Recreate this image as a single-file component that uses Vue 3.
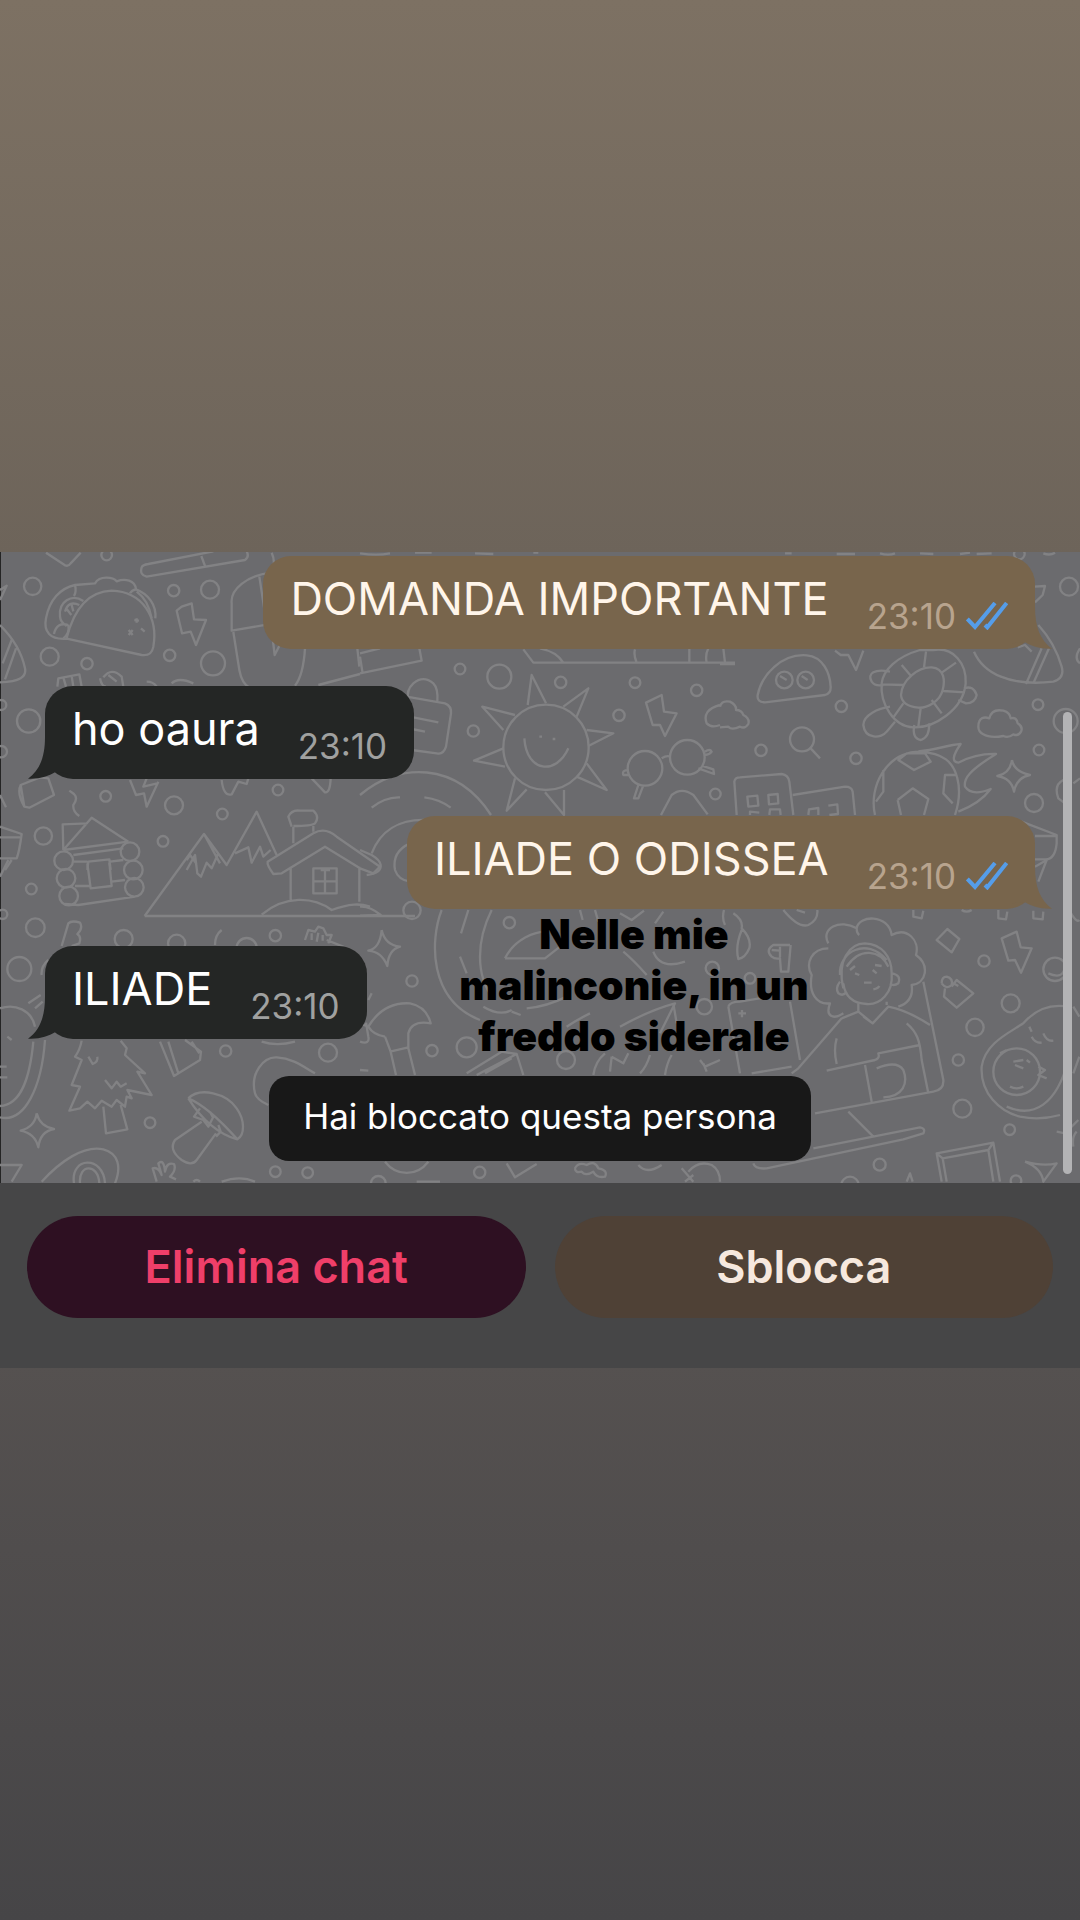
<template>
  <main class="story">
    <section class="chat-card">
      <div class="chat">
        <svg class="wallpaper" viewBox="0 36 3240 1893" preserveAspectRatio="xMinYMin slice" aria-hidden="true">
          <circle v-for="([x, y, r], i) in dots" :key="i" :cx="x" :cy="y" :r="r" />
          <path v-for="(d, i) in doodles.topLeft" :key="'a' + i" :d="d" />
          <g transform="translate(1080 0)">
            <path v-for="(d, i) in doodles.topMiddle" :key="i" :d="d" />
          </g>
          <g transform="translate(2160 0)">
            <path v-for="(d, i) in doodles.topRight" :key="i" :d="d" />
          </g>
          <g transform="translate(0 960)">
            <path v-for="(d, i) in doodles.bottomLeft" :key="i" :d="d" />
          </g>
          <g transform="translate(1080 960)">
            <path v-for="(d, i) in doodles.bottomMiddle" :key="i" :d="d" />
          </g>
          <g transform="translate(2160 960)">
            <path v-for="(d, i) in doodles.bottomRight" :key="i" :d="d" />
          </g>
        </svg>

        <div class="messages">
          <div
            v-for="message in messages"
            :key="message.text"
            class="bubble"
            :class="message.sent ? 'sent' : 'received'"
          >
            <svg class="tail" viewBox="84 591 120 126" aria-hidden="true">
              <path d="M135 591C135 650 120 690 84 716C120 718 145 708 165 697L204 700V591Z" />
            </svg>
            <span class="text">{{ message.text }}</span>
            <span class="meta">
              <time>{{ message.time }}</time>
              <svg v-if="message.sent" class="checks" viewBox="0 0 126 84" aria-label="Letto">
                <path d="M4 51L27 75L87 3M57 69L64 76L122 3" />
              </svg>
            </span>
          </div>
          <p class="notice">Hai bloccato questa persona</p>
        </div>

        <p class="caption">Nelle mie<br />malinconie, in un<br />freddo siderale</p>
        <div class="scrollbar"></div>
      </div>

      <div class="actions">
        <button type="button" class="action delete">Elimina chat</button>
        <button type="button" class="action unblock">Sblocca</button>
      </div>
    </section>
  </main>
</template>

<script setup>
const messages = [
  { text: 'DOMANDA IMPORTANTE', time: '23:10', sent: true },
  { text: 'ho oaura', time: '23:10', sent: false },
  { text: 'ILIADE O ODISSEA', time: '23:10', sent: true },
  { text: 'ILIADE', time: '23:10', sent: false },
];

// x, y, radius
const dots = [
  [98, 139, 26], [320, 45, 16], [521, 152, 17], [630, 149, 27], [149, 350, 27],
  [261, 371, 17], [509, 346, 17], [639, 370, 36], [86, 543, 35], [317, 769, 16],
  [522, 796, 27], [667, 822, 16], [834, 750, 16], [130, 888, 26], [489, 904, 16],
  [4, 495, 15], [4, 635, 17], [1380, 387, 16], [1498, 410, 36], [1682, 427, 17],
  [1905, 428, 16], [2090, 451, 17], [1857, 526, 17], [1420, 573, 17], [2146, 762, 16],
  [3207, 140, 27], [2524, 499, 17], [3114, 494, 16], [2283, 631, 17], [2568, 655, 17],
  [3117, 630, 16], [3102, 789, 27], [3197, 543, 36], [3058, 42, 16], [94, 1047, 16],
  [8, 1123, 14], [106, 1163, 28], [58, 1287, 36], [371, 1197, 27], [826, 1187, 17],
  [677, 1533, 17], [984, 1538, 27], [450, 1748, 16], [826, 1895, 16], [923, 1898, 16],
  [1236, 1111, 26], [1528, 1148, 17], [1236, 1323, 17], [1296, 1532, 17], [1400, 1522, 30],
  [1698, 1560, 27], [2113, 1400, 23], [1439, 1897, 17], [2952, 1263, 17], [3032, 1390, 27],
  [2925, 1462, 26], [2875, 1560, 17], [2887, 1706, 27], [3029, 1769, 16], [2639, 1874, 18],
  [3165, 1288, 35], [2250, 1315, 16], [2137, 1285, 20], [530, 1210, 26], [740, 1224, 30],
  [2550, 1936, 26], [3048, 1922, 16], [1135, 1930, 22],
];

const doodles = {
  topLeft: [
    // napkin, ruler
    'M138 38L195 76Q205 80 212 70L242 38',
    'M425 82Q418 105 440 110L735 60Q750 50 738 30M425 82Q428 74 445 72L640 34M604 48L615 78',
    // taco
    'M200 294C215 235 250 155 335 152C430 155 475 235 460 320C455 345 440 347 425 345L200 296C150 300 130 275 138 235C148 180 180 145 225 135L285 130C300 105 340 112 350 124C375 115 405 120 408 148C445 162 470 195 466 235',
    'M225 135Q230 155 222 168M408 148Q395 150 390 160M250 183C215 160 175 185 180 230C181 245 190 252 200 258M238 195Q205 180 195 215M215 195L220 214M200 207L214 225M162 282Q170 245 205 255M205 255Q210 280 190 295M410 155Q445 180 455 235',
    'M403 240L417 242M410 235V248M386 270L398 285M398 270L386 285M423 265L434 275',
    'M530 212L545 200L575 190L582 238L618 240L588 315L572 275L546 280Z',
    // glass
    'M815 98C740 105 690 150 695 190V272L800 254M778 110L800 254M700 276L718 390Q725 430 750 445M815 38Q825 60 820 80M818 295L824 345L842 310M915 325Q910 405 885 437M955 435L1080 402M1072 325L1078 380',
    // slice of pizza
    'M0 255C35 290 65 335 75 385C80 410 60 425 0 427M35 300L8 370M48 325L15 418M0 150L20 137L0 180',
    'M172 440L175 415L238 403L245 440M190 412L198 440M215 408L220 440M300 415Q305 440 318 440M310 412Q335 380 365 410L370 440M325 405L350 425M440 425Q460 425 470 440M515 430Q535 410 580 430',
    'M62 735L120 712L145 715L162 765L88 803L73 800ZM62 735Q50 760 73 800M0 765L18 802',
    'M208 752L222 762Q235 775 220 795Q218 815 238 828M390 720L408 765L432 760L440 800L475 725M440 715L430 740L472 730M665 720Q670 770 695 763L715 725L740 732L745 715M935 715L975 757Q990 760 992 715',
    // wooden cabin
    'M190 930L188 853L262 850M190 930L275 833L385 905M190 930L385 905M220 945L370 925M262 990L265 965L328 958L332 990M220 965L262 965M330 965L370 960',
    'M163 962A28 28 0 1 0 219 962A28 28 0 1 0 163 962M362 935A28 28 0 1 0 418 935A28 28 0 1 0 362 935',
    'M0 860L65 882Q58 935 50 955H0M0 892H60M35 960L15 990',
    // mountains
    'M434 1128L612 882L680 975L770 815L830 945M560 960L570 945L590 972M612 882L660 970M560 990L585 945L592 1000L603 1010L620 968L635 985L655 940M705 940L745 922L755 968L780 920L790 950L812 930',
    'M434 1128H1245M875 860L865 830Q875 808 900 812H940Q960 830 945 850Q935 858 880 858M880 860V910M940 858V875',
    // chalet
    'M803 965Q800 975 820 1002L845 1000L975 920L1080 985L1120 1000L1140 980L1010 890Q975 860 940 880ZM872 980V1085M1078 980V1085M940 985H1010V1060H940ZM975 985V1060M940 1024H1010M962 990H990M785 1124C855 1065 940 1070 995 1110C1050 1090 1080 1090 1110 1100',
  ],
  topMiddle: [
    'M0 40Q50 48 90 40M165 38H215M520 38H535M345 40L400 42M0 400L185 362L178 325M0 350L8 400M0 340L60 325M490 328L520 368H1125M540 325Q590 335 610 368M825 328Q820 345 830 368M988 325V368M1045 325Q1035 345 1040 368',
    // bag
    'M145 480Q138 450 160 430Q190 405 220 430Q235 445 232 485M140 470L255 490Q275 498 273 520L258 620Q250 645 230 640L155 630M160 532L235 547M155 567L195 575',
    // sun
    'M430 622A128 128 0 1 0 686 622A128 128 0 1 0 430 622M493 595C500 700 590 705 625 625M538 590H546M578 597H586',
    'M503 495L515 405L558 490M610 500L685 445L650 530M680 570L760 580L685 618M680 670L740 750L650 710M612 750V825L555 757M500 748L440 812L465 715M435 680L342 662L430 625M430 570L367 500L465 525',
    'M858 488L905 465L912 515L950 520L915 588L900 555H878Z',
    // glasses
    'M803 685A52 52 0 1 0 907 685A52 52 0 1 0 803 685M930 652A52 52 0 1 0 1034 652A52 52 0 1 0 930 652M905 655Q920 645 932 650M835 735L822 775H835L850 736M1015 685L1062 702L1060 688L1025 677M1035 635Q1050 625 1055 635Q1048 645 1035 645M805 690Q785 690 790 705H808M1080 495Q1025 510 1040 550Q1055 565 1080 555M903 825L935 765Q965 740 1000 765L1043 823',
    // disc
    'M0 765C115 665 290 665 393 825M35 803Q75 770 120 772M193 772Q240 778 272 803M35 940C60 875 115 835 205 840M0 930L35 945Q60 960 62 975Q65 1000 20 1005M150 910Q95 935 105 990Q115 1020 150 1025',
  ],
  topRight: [
    'M345 332L362 345H385L408 390L430 332M0 372H45M10 325L15 368M195 40H215M350 42H405M480 40Q505 48 525 40M600 40L640 42M720 42L750 38M770 42L815 40M970 40Q990 48 1005 38M943 140L975 138L968 165L945 187',
    // gumdrop
    'M113 465C125 405 185 340 260 346C310 350 330 400 332 440Q333 460 315 465L135 487Q110 487 113 465M168 420A25 25 0 1 0 218 420A25 25 0 1 0 168 420M232 420A25 25 0 1 0 282 420A25 25 0 1 0 232 420M180 408L200 420M245 408L263 420',
    // turtle
    'M600 330C530 350 490 390 485 430C480 490 520 560 580 562C640 565 730 510 737 430C740 370 700 320 640 330ZM543 465C545 420 595 380 635 382C675 385 675 425 668 450C660 485 620 505 595 503C565 500 545 490 543 465M545 375L575 410M618 335L612 382M708 368L662 400M735 457L670 453M665 520L635 480M595 560L602 505M518 535L550 490M485 433L550 435',
    'M510 395C465 385 440 400 455 425Q465 440 490 435M510 500C475 505 430 525 430 555C435 600 485 595 500 575L525 545M583 555Q575 595 603 600Q630 590 627 550M732 445Q760 435 770 465Q765 490 738 490L715 480',
    'M775 560C775 530 795 530 808 535Q815 505 850 512Q870 518 872 535Q890 530 893 550Q910 560 903 575Q895 590 880 583Q865 595 850 588Q810 595 790 583Q775 575 775 560M0 500Q5 480 30 485Q50 495 48 510Q65 510 70 525Q90 535 85 552Q75 568 60 560Q35 572 25 560L0 562',
    'M210 598A36 36 0 1 0 282 598A36 36 0 1 0 210 598M272 625L300 655',
    // planet
    'M762 335C790 400 870 440 1000 425Q1035 415 1025 380Q1005 310 955 255M987 325L940 430M965 325L918 432M893 322L915 315L935 335M1080 325Q1060 355 1080 370',
    // blocks
    'M50 825L43 725Q45 712 60 712L185 702Q205 705 208 725L220 825M218 765L375 740Q395 740 398 755L405 825M82 770L112 767L115 797L85 800ZM145 765L173 762L175 790L147 793ZM90 825V815L118 818M148 825L150 808H180L182 825M325 797L352 793L354 822L328 825M265 825L267 808L295 804V825',
    // football and flames
    'M465 825C445 740 500 635 600 635C670 640 700 665 712 715Q725 765 705 825M535 660L560 640H615L632 665L582 690ZM533 780L578 745L625 777L612 825M543 825L533 780M490 690V755L468 785M710 705H675L670 760L698 790M595 634C650 630 680 615 722 612Q685 665 715 668Q770 640 828 642C750 690 730 715 735 740Q755 770 812 747Q780 790 715 815',
    'M876 660Q882 695 930 705Q890 712 882 755Q875 715 832 708Q870 700 876 660M1030 720Q1000 735 1015 775L1035 790M1060 730L1080 715M905 845L1010 885V910Q1005 960 975 958H945M945 888H1010',
  ],
  bottomLeft: [
    // bottom logs of the cabin
    'M170 55A28 28 0 1 0 226 55A28 28 0 1 0 170 55M178 108A28 28 0 1 0 234 108A28 28 0 1 0 178 108M372 30A28 28 0 1 0 428 30A28 28 0 1 0 372 30M375 82A28 28 0 1 0 431 82A28 28 0 1 0 375 82M262 10L272 85L335 78L328 8M225 78H268M335 65L375 60M195 132L235 135L405 110M0 50L25 0',
    'M185 258L205 190Q215 180 240 188Q250 205 232 222Q245 230 238 250L215 258M645 255Q645 225 665 210M915 240L925 210L945 215L955 200L970 205L980 225H995L985 250M935 240V220M950 245L955 218M968 242V225M980 240L1035 262',
    // sloth
    'M0 445C45 430 95 450 105 500M105 445L128 425M125 345Q122 320 145 300M22 530L35 540M100 545C90 650 65 735 0 738M135 540C125 680 75 790 0 772M0 620H20M0 652H22M85 430L122 405',
    // fir tree
    'M245 542Q240 570 225 590L245 600L215 675L240 680L208 752L240 745L262 725L285 745L305 722L335 740L350 720L375 740L380 710L395 715L382 690L455 705L412 635L435 640L375 585L380 565L362 542M310 740L318 820L382 808L362 735M265 590L278 612Q295 605 292 590M315 660L335 685L350 665L362 680L380 670',
    // mushroom
    'M565 715C600 680 680 700 710 745C735 780 735 825 712 838C660 825 605 780 565 715M565 715Q625 740 712 838M605 785L525 840Q505 870 545 900Q575 920 590 900L648 820M600 745L582 770L610 780L625 800L640 770M655 795L662 815L648 830M630 755L640 775',
    'M480 545L522 648L600 600L603 575L555 540M505 545L535 640M575 545L598 580M765 700C750 640 790 590 830 592C880 595 910 620 945 640M765 700Q770 720 805 735M785 545Q830 560 885 545',
    'M110 760Q120 800 162 807Q120 815 115 862Q105 820 62 812Q105 800 110 760',
    // avocado
    'M125 965C180 905 250 855 310 868C355 880 365 920 345 970M222 970C210 890 310 885 315 970M240 970C235 910 295 910 298 970M0 915H65Q50 940 35 965M470 965L458 925Q475 920 485 945L475 910Q492 895 495 935Q500 905 522 912Q530 930 510 950L528 958M665 965Q720 945 765 965M580 965Q590 955 600 965',
  ],
  bottomMiddle: [
    'M0 140Q30 138 62 165L0 167M65 210Q75 255 120 260Q85 270 82 318Q65 275 25 272Q60 265 65 210M245 150C210 240 205 420 360 480M325 150L303 220M300 290L320 340M395 150C350 240 345 345 400 415M370 440Q420 470 455 450M435 295C465 235 525 215 560 215M435 295H555L600 260M500 445Q560 440 620 410',
    // axe
    'M0 490L25 500Q70 425 150 430Q200 440 212 490Q155 480 145 520V565L165 645M75 530L92 575L108 645M90 575L145 562M75 530Q40 525 25 500M0 545Q30 555 25 530L18 488M0 630L25 632M25 420L35 400',
    'M320 640L425 575L470 582L490 645M350 645L470 582M375 640L455 595M455 455L482 465M660 150L668 180M705 150L715 185M780 160L815 180L852 152M790 275Q820 300 860 345M880 275Q900 330 975 305M780 500Q870 450 945 430L900 520M620 500Q650 480 690 460M940 430L950 490M755 590L750 635M755 590L790 610L805 580M700 645Q705 605 735 580M870 585Q860 620 840 640M915 645Q920 610 935 585M1020 600L1035 620L1080 600M1030 610L1040 635M910 155L885 190',
    'M75 905C110 950 170 950 205 905M440 910L465 952L530 912M645 925Q655 905 680 915Q705 900 715 925Q745 930 735 950Q710 955 700 935Q675 950 665 935Q645 940 645 925M835 915Q860 945 905 915M965 925L1000 965M985 935Q1015 900 1055 915Q1080 930 1080 965M975 965L1000 945M170 965H240',
  ],
  bottomRight: [
    'M12 150Q5 175 15 195M40 160Q70 180 65 205Q95 235 88 265Q75 295 55 297Q45 260 65 210M190 150Q235 205 265 195Q295 180 292 150M230 150L255 158M580 150V170L605 175L610 152M835 150V175L858 178L862 155M940 152V175L968 178L970 155M725 150Q740 160 755 150M650 240L682 207L718 237L695 277Z',
    'M210 255H160Q135 270 155 290Q165 298 180 295L183 335H205L212 255M180 260V292M155 270L180 272',
    // woman at a laptop
    'M370 385C350 300 390 250 435 250C485 252 515 290 515 340C520 400 480 435 440 432C400 430 375 410 370 370M360 345C355 275 440 230 500 300M380 320C420 260 480 270 505 320M360 365Q345 385 355 400Q370 410 380 395M515 340Q545 345 535 370Q520 380 510 370M390 330L405 318M465 315L485 318M405 340L418 345M432 368H455M460 388Q475 385 478 378M458 330L470 340',
    'M325 250C300 205 360 175 410 205C415 165 505 160 515 225C560 200 600 240 588 285C630 315 620 370 575 375C580 410 565 430 535 440M325 265C275 265 255 310 275 345C265 400 290 435 330 430C315 470 340 480 370 460M415 430V455M500 435V425M410 205Q410 220 418 225',
    'M365 475L235 625L215 640M365 475L415 455L458 490L505 440Q560 450 630 495M458 490L430 470M560 490C590 515 600 540 605 600L625 700M350 535Q340 570 350 612M610 365L670 660Q672 690 640 695L285 760M320 632L465 600Q480 595 475 580L600 555M435 615L455 725M470 625Q530 600 550 630C565 670 550 710 490 712M280 865L600 802Q618 805 610 820L550 838L140 925Q105 928 100 910M385 755L460 830M210 425L240 600M25 440Q30 425 60 425L150 410M25 440L60 640M95 640L215 620M55 460H78M66 450V472',
    'M845 235L890 215L902 262L935 265L903 338L885 300L865 302Z',
    'M665 370Q665 350 680 350Q700 355 695 375Q680 390 665 370M695 380L710 360L760 400L710 443L672 410L675 385M700 370L715 378',
    // baby in a blanket
    'M1045 440C985 430 940 455 910 490C865 520 795 550 785 620C780 700 840 755 900 770C950 780 985 775 1020 765M860 740C940 775 1010 735 1045 600M820 635A70 70 0 1 0 960 635A70 70 0 1 0 820 635M840 580L860 570M928 500L935 515M935 530Q945 550 965 548M970 520Q980 545 1000 542M880 605L910 600M885 615L910 625M870 680Q890 690 910 680M955 620L975 630L955 645L980 655M920 600L930 608',
    'M665 965L650 880L820 848L840 965M680 965L668 895L805 870L820 965M650 880L668 895M820 848L805 870M915 905Q970 920 1010 910L970 965Q965 925 915 905M560 965L570 940L578 965M1010 815L1035 820L1075 780M1060 860Q1055 830 1070 815M985 340Q1030 360 1035 320M1050 155Q1070 190 1078 180M1060 440L1078 470M1060 640L1078 590M945 20L980 0L955 65',
  ],
};
</script>

<style>
body { margin: 0; background: #474547; }
</style>

<style scoped>
.story {
  display: flex;
  flex-direction: column;
  justify-content: center;
  min-height: 100vh;
  background: linear-gradient(#7d7163, #6d645a 29%, #555150 71%, #464547);
  font-family: Inter, "Liberation Sans", sans-serif;
}

.chat { position: relative; overflow: hidden; background: #6b6b6e; box-shadow: inset 1px 0 #242424; }
.wallpaper { position: absolute; top: 0; left: 0; width: 100%; height: 100%; fill: none; stroke: #828284; stroke-width: 7; stroke-linejoin: round; }

.messages { position: relative; display: flex; flex-direction: column; gap: 37px; padding: 4px 45px 22px; }
.bubble { position: relative; display: flex; align-items: flex-start; gap: 38px; box-sizing: border-box; min-height: 93px; padding: 15px 27px 13px; border-radius: 28px; white-space: nowrap; }
.received { align-self: flex-start; background: #242625; color: #fff; }
.sent { align-self: flex-end; background: #78654c; color: #fff5ea; }
.tail { position: absolute; bottom: 0; left: -17px; width: 40px; height: 42px; fill: #242625; }
.sent .tail { left: auto; right: -17px; fill: #78654c; transform: scaleX(-1); }
.text { font-size: 45px; line-height: 56px; }
.meta { display: flex; align-items: center; align-self: flex-end; gap: 10px; color: #a0a1a0; font-size: 35px; line-height: 40px; }
.sent .meta { color: #b8a48e; }
.checks { width: 42px; height: 28px; fill: none; stroke: #559de9; stroke-width: 12; }

.notice { align-self: center; margin: 0; padding: 18px 34px 22px; border-radius: 20px; background: #181818; color: #fff; font-size: 35px; line-height: 45px; }
.caption { position: absolute; top: 357px; left: 58.7%; margin: 0; transform: translateX(-50%); color: #000; font-size: 41px; font-weight: 900; line-height: 51px; text-align: center; white-space: nowrap; }
.scrollbar { position: absolute; top: 160px; right: 8px; bottom: 9px; width: 9px; border-radius: 5px; background: #b3b3b5; }

.actions { display: flex; gap: 29px; padding: 33px 27px 50px; background: #464647; }
.action { flex: 1; height: 102px; padding: 0; border: 0; border-radius: 51px; font-family: inherit; font-size: 45px; font-weight: 600; line-height: 56px; }
.delete { background: #2e1022; color: #ef3f69; }
.unblock { background: #4f4136; color: #f6e8de; }
</style>
